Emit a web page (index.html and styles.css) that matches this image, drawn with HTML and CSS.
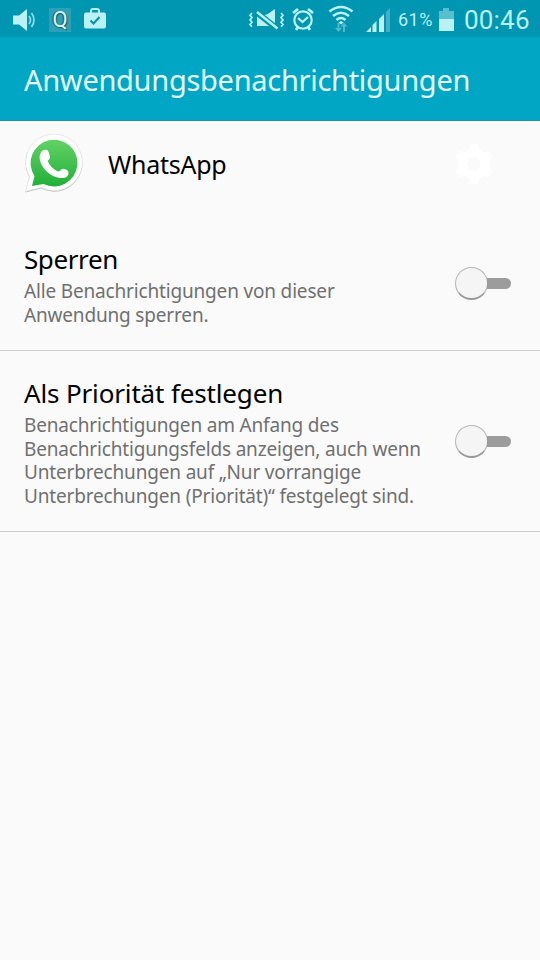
FILE: index.html
```html
<!DOCTYPE html>
<html lang="de">
<head>
  <meta charset="UTF-8">
  <meta name="viewport" content="width=device-width, initial-scale=1.0">
  <title>Anwendungsbenachrichtigungen</title>
  <link rel="stylesheet" href="styles.css">
</head>
<body>
  <div class="status-bar">
    <div class="status-left">
      <svg class="icon-sound" width="22" height="24" viewBox="0 0 22 24">
        <path d="M0 7.500h6l8-6.500v22l-8-6.500H0z" fill="#b9f1f4"/>
        <path d="M16 8q3 4 0 8M18.500 5q5 7 0 14" fill="none" stroke="#8fdde6" stroke-width="1.700"/>
      </svg>
      <span class="icon-q">Q</span>
      <svg class="icon-bag" width="22" height="22" viewBox="0 0 22 22">
        <path d="M7 5V3q0-2 2-2h4q2 0 2 2v2" fill="none" stroke="#b9f1f4" stroke-width="2"/>
        <rect x="0" y="4.500" width="22" height="16" rx="2" fill="#b9f1f4"/>
        <path d="M6.500 12.500l3 3 6-6.500" fill="none" stroke="#078fac" stroke-width="2"/>
      </svg>
    </div>
    <div class="status-right">
      <svg class="icon-mute" width="36" height="24" viewBox="0 0 36 24">
        <path d="M3 5l-2 2.300 2 2.300-2 2.300 2 2.300-2 2.300 2 2.300M32 5l2 2.300-2 2.300 2 2.300-2 2.300 2 2.300-2 2.300" fill="none" stroke="#b9f1f4" stroke-width="1.700"/>
        <path d="M8 8.500l12 9.500H8zM14.500 7l3.500-.5 8-5.500v15z" fill="#b9f1f4"/>
        <path d="M8 4l20.500 16.500" stroke="#0095b1" stroke-width="5"/>
        <path d="M8 4l20.500 16.500" stroke="#b9f1f4" stroke-width="2.500"/>
      </svg>
      <svg class="icon-alarm" width="22" height="24" viewBox="0 0 22 24">
        <circle cx="11" cy="13" r="8.700" fill="none" stroke="#b9f1f4" stroke-width="2.200"/>
        <path d="M1 6l5-4M21 6l-5-4M6 20l-2 3M16 20l2 3" stroke="#b9f1f4" stroke-width="2.800"/>
        <path d="M6 11l4.500 4 5.500-5" fill="none" stroke="#b9f1f4" stroke-width="2.200"/>
      </svg>
      <svg class="icon-wifi" width="26" height="27" viewBox="0 0 26 27">
        <path d="M1.500 6.500q11.500-9 23 0M5 11q8-6.500 16 0M8.500 15q4.500-4 9 0" fill="none" stroke="#b9f1f4" stroke-width="2.600"/>
        <path d="M10.500 17.500l2.500-1.500 2.500 1.500-2.500 2z" fill="#b9f1f4"/>
        <path d="M9.500 18h2v5h2.500l-3.500 4-3.500-4h2.500zM15 27v-5.500h-2.500l3.500-4 3.500 4H17V27z" fill="#52bacb"/>
      </svg>
      <svg class="icon-signal" width="24" height="24" viewBox="0 0 24 24">
        <path d="M0 24l5-5v5zM6.500 24v-7l4-4v11zM13 24V11l5-5v18z" fill="#b9f1f4"/>
        <path d="M20 24V4l4-4v24z" fill="#45b0c5"/>
      </svg>
      <span class="percent">61%</span>
      <svg class="icon-battery" width="15" height="24" viewBox="0 0 15 24">
        <path d="M0 3h4V0h6v3h5v9H0z" fill="#58bfcf"/>
        <path d="M0 11h15v12H0z" fill="#b9f1f4"/>
      </svg>
      <span class="clock">00:46</span>
    </div>
  </div>

  <header class="title-bar">
    <h1>Anwendungsbenachrichtigungen</h1>
  </header>

  <main>
    <div class="app-row">
      <svg class="app-logo" width="60" height="60" viewBox="0 0 60 60">
        <defs>
          <linearGradient id="green" x1="0" y1="0" x2="0" y2="1">
            <stop offset="0" stop-color="#63d267"/>
            <stop offset="1" stop-color="#20b038"/>
          </linearGradient>
        </defs>
        <path d="M1.500 58.500l4-15A28.300 28.300 0 1 1 17 54.500z" fill="#bcbcbc"/>
        <path d="M1.500 57.500l4-15A28.300 28.300 0 1 1 17 53.500z" fill="#fff" stroke="#dedede" stroke-width=".7"/>
        <path d="M8 52l2.500-10A23.400 23.400 0 1 1 19.500 50z" fill="url(#green)"/>
        <path d="M17.500 17.500c1.500-2 4-2.200 5.500-1.500 1.500 1 2.500 4 3 7 .3 2-2.500 3-2 4.500 2 4.500 5.500 8 10 10 2 .5 3-3 5-2.700 3 .5 5.500 1.500 5.500 4.200 0 4-4 5.500-8 5-6-.5-12-4-16-9s-7-12-3-17.500z" fill="#fff"/>
      </svg>
      <span class="app-name">WhatsApp</span>
      <svg class="app-gear" width="42" height="42" viewBox="-21 -21 42 42">
        <circle r="11" fill="none" stroke="#fff" stroke-width="9"/>
        <path d="M0-20v7M0 13v7M-17-10l6 4M11 6l6 4M-17 10l6-4M11-6l6-4" stroke="#fff" stroke-width="9"/>
      </svg>
    </div>

    <div class="setting setting-block">
      <div class="setting-text">
        <h2>Sperren</h2>
        <p>Alle Benachrichtigungen von dieser<br>Anwendung sperren.</p>
      </div>
      <div class="switch"><span class="knob"></span><span class="track"></span></div>
    </div>

    <div class="setting setting-priority">
      <div class="setting-text">
        <h2>Als Priorität festlegen</h2>
        <p>Benachrichtigungen am Anfang des<br>Benachrichtigungsfelds anzeigen, auch wenn<br>Unterbrechungen auf „Nur vorrangige<br>Unterbrechungen (Priorität)“ festgelegt sind.</p>
      </div>
      <div class="switch"><span class="knob"></span><span class="track"></span></div>
    </div>
  </main>
</body>
</html>
```

FILE: styles.css
```css
* {
  box-sizing: border-box;
}

body {
  margin: 0;
  min-height: 960px;
  background-color: #fafafa;
  font-family: "Noto Sans", sans-serif;
}

h1, h2, p {
  margin: 0;
  font-weight: normal;
  white-space: nowrap;
}

svg {
  display: block;
  flex: none;
}

/* Status bar */
.status-bar {
  display: flex;
  justify-content: space-between;
  height: 37px;
  padding: 0 9px 0 13px;
  background-color: #0095b1;
  color: #b9f1f4;
  font-family: Roboto, sans-serif;
}

.status-left,
.status-right {
  display: flex;
  align-items: center;
  height: 39px;
}

.icon-q {
  width: 22px;
  height: 24px;
  margin: 0 13px 0 14px;
  background-color: #2f9fb6;
  color: #d3f7f7;
  font-size: 22px;
  line-height: 24px;
  text-align: center;
  text-shadow: 1px 1px 1px #24505c, -1px 0 1px #24505c;
}

.icon-bag {
  margin-bottom: 2px;
}

.icon-alarm {
  margin-left: 7px;
  margin-bottom: 1px;
}

.icon-wifi {
  margin-left: 14px;
  margin-bottom: 2px;
}

.icon-signal {
  margin-left: 12px;
}

.percent {
  width: 36px;
  margin-left: 8px;
  font-size: 18px;
  letter-spacing: 0.5px;
}

.icon-battery {
  margin-left: 5px;
}

.clock {
  width: 67px;
  margin-left: 10px;
  font-size: 26px;
  letter-spacing: 0.2px;
}

/* Title */
.title-bar {
  display: flex;
  align-items: center;
  height: 84px;
  padding: 2px 24px 0;
  background-color: #00a6c4;
  border-bottom: 1px solid #1597ae;
  color: #e4fdff;
}

.title-bar h1 {
  font-size: 29px;
  letter-spacing: -0.29px;
}

/* App */
.app-row {
  display: flex;
  align-items: center;
  height: 85px;
  padding: 0 45px 0 24px;
}

.app-name {
  flex: 1;
  margin-left: 24px;
  font-size: 25px;
  letter-spacing: -0.25px;
  color: #000;
}

/* Settings */
.setting {
  display: flex;
  justify-content: space-between;
  padding: 0 28px 0 24px;
  border-bottom: 1px solid #cbcbcb;
}

.setting-block {
  height: 145px;
  padding-top: 36px;
}

.setting-priority {
  height: 181px;
  padding-top: 25px;
}

.setting h2 {
  margin-bottom: 3px;
  font-size: 26px;
  line-height: 35px;
  letter-spacing: -0.15px;
  color: #000;
}

.setting-block h2 {
  letter-spacing: -0.4px;
}

.setting p {
  font-size: 19px;
  line-height: 23.5px;
  letter-spacing: -0.17px;
  color: #707070;
}

/* Switch */
.switch {
  display: flex;
  align-items: center;
  width: 57px;
  height: 33px;
}

.setting-block .switch {
  margin-top: 25px;
}

.setting-priority .switch {
  margin-top: 49px;
}

.knob {
  flex: none;
  width: 33px;
  height: 33px;
  border: 1px solid #b5b5b5;
  border-bottom: 2px solid #999;
  border-radius: 50%;
  background-color: #f5f5f5;
}

.track {
  width: 24px;
  height: 11px;
  margin-left: -1px;
  border-radius: 0 6px 6px 0;
  background-color: #9c9c9c;
}
```
